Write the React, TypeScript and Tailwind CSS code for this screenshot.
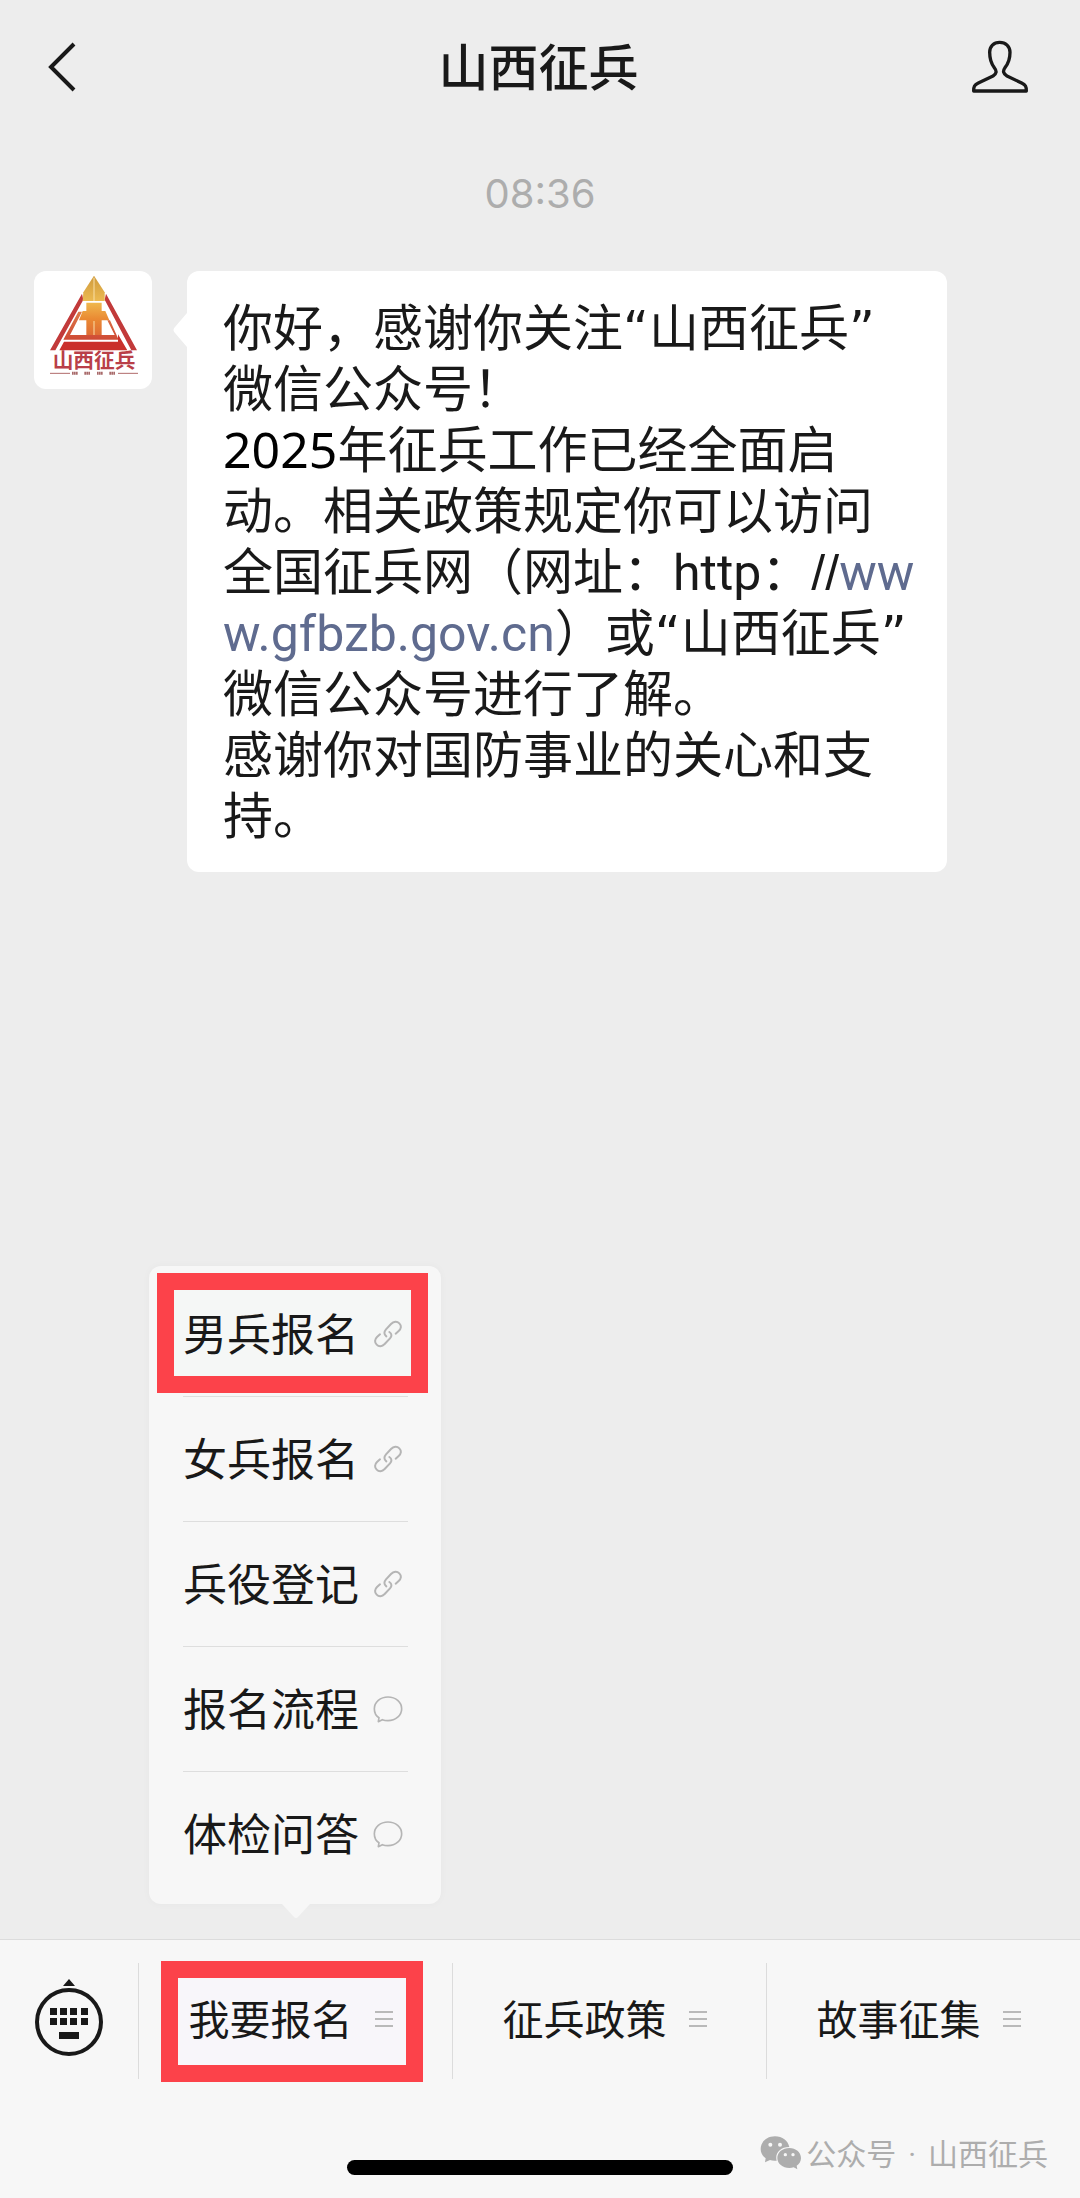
import React from "react";

type MenuEntry = { label: string; kind: "link" | "chat"; marked?: boolean };

const entries: MenuEntry[] = [
  { label: "男兵报名", kind: "link", marked: true },
  { label: "女兵报名", kind: "link" },
  { label: "兵役登记", kind: "link" },
  { label: "报名流程", kind: "chat" },
  { label: "体检问答", kind: "chat" },
];

function BackIcon() {
  return (
    <svg width="30" height="52" viewBox="0 0 30 52" fill="none" stroke="#191919" strokeWidth="4" aria-hidden="true">
      <path d="M27 3 L4 26 L27 49" />
    </svg>
  );
}

function PersonIcon() {
  return (
    <svg width="60" height="58" viewBox="89 53 180 174" fill="none" stroke="#191919" strokeWidth="10" strokeLinejoin="round" aria-hidden="true">
      <path d="M178 66 C160 66 148 78 148 96 C148 118 154 132 162 142 C170 152 169 160 158 167 L114 188 C102 194 100 198 100 212 L258 212 C258 198 256 194 244 188 L200 167 C188 160 187 152 194 142 C204 130 209 116 209 96 C209 78 196 66 178 66 Z" />
    </svg>
  );
}

function Logo() {
  return (
    <svg className="block size-full" viewBox="-36 0 354 354" role="img" aria-label="山西征兵">
      <defs>
        <linearGradient id="tip" x1="0" y1="0" x2="0" y2="1">
          <stop offset="0" stopColor="#cf9a3c" />
          <stop offset="1" stopColor="#ecba52" />
        </linearGradient>
        <linearGradient id="body" x1="0" y1="0" x2="0" y2="1">
          <stop offset="0" stopColor="#efb84e" />
          <stop offset="0.5" stopColor="#ea8a33" />
          <stop offset="1" stopColor="#df6d35" />
        </linearGradient>
        <linearGradient id="frame" x1="0" y1="0" x2="0" y2="1">
          <stop offset="0" stopColor="#dd7a48" />
          <stop offset="1" stopColor="#cf4a35" />
        </linearGradient>
      </defs>
      <path d="M108 68 L112 86 L28 238 L12 238 Z M180 68 L176 86 L256 238 L273 238 Z" fill="#c23a3a" />
      <path d="M97 122 L108 122 L72 192 L206 192 L184 148 L192 148 L218 206 L52 206 Z" fill="url(#frame)" />
      <path d="M54 212 H216 V190 L244 238 H40 Z" fill="#ca302b" />
      <path d="M144 14 L112 64 L110 90 L176 90 L176 64 Z" fill="url(#tip)" />
      <path d="M121 95 H167 V120 H178 L190 148 H167 V192 H121 V148 H99 L110 120 H121 Z" fill="url(#body)" />
      <path d="M144 20 V90 M144 150 V192" stroke="#f9dfa8" strokeWidth="3" />
      <text x="144" y="291" textAnchor="middle" fontSize="62" fontWeight="700" fill="#b93f48" fontFamily="'Noto Sans CJK SC', sans-serif">
        山西征兵
      </text>
      <path d="M12 307 H72 M216 307 H276" stroke="#b06a6a" strokeWidth="3" />
      <path d="M78 307 H96 M115 307 H133 M153 307 H171 M190 307 H208" stroke="#a86a6a" strokeWidth="9" strokeDasharray="5 1" />
    </svg>
  );
}

function LinkIcon() {
  return (
    <svg width="30" height="30" viewBox="0 0 90 90" fill="none" stroke="#b5b5b5" strokeWidth="6" strokeLinecap="round" aria-hidden="true">
      <path d="M40 52 C32 46 33 38 39 31 L54 15 C62 7 72 6 79 13 C86 20 85 29 77 36 L68 44" />
      <path d="M49 39 C57 44 57 52 51 58 L35 75 C27 83 18 84 11 77 C4 70 5 61 12 54 L21 46" />
    </svg>
  );
}

function ChatIcon() {
  return (
    <svg width="30" height="30" viewBox="0 0 90 90" fill="none" stroke="#b5b5b5" strokeWidth="5" strokeLinejoin="round" aria-hidden="true">
      <path d="M45 9 C68 9 86 24 86 44 C86 64 68 80 45 80 C38 80 33 79 28 77 L16 83 L18 71 C8 65 4 55 4 44 C4 24 22 9 45 9 Z" />
    </svg>
  );
}

function BarsIcon() {
  return (
    <svg width="18" height="18" viewBox="0 0 18 18" stroke="#b9b9b9" strokeWidth="2" aria-hidden="true">
      <path d="M0 2 H18 M0 9 H18 M0 16 H18" />
    </svg>
  );
}

function KeyboardIcon() {
  return (
    <svg width="68" height="78" viewBox="0 0 68 78" fill="#191919" aria-hidden="true">
      <path d="M34 0 L40 7 H28 Z" />
      <circle cx="34" cy="43" r="32" fill="none" stroke="#191919" strokeWidth="4" />
      <path d="M15 29h7v7h-7z M25 29h7v7h-7z M35 29h7v7h-7z M46 29h7v7h-7z M15 39h7v7h-7z M25 39h7v7h-7z M35 39h7v7h-7z M46 39h7v7h-7z M24 53h20v7h-20z" />
    </svg>
  );
}

function WeChatIcon() {
  return (
    <svg width="42" height="36" viewBox="48 52 126 108" fill="#adadad" aria-hidden="true">
      <path d="M93 56 C69 56 50 72 50 94 C50 106 56 115 65 122 L63 134 L78 127 C83 129 90 130 98 129 C92 108 108 88 136 88 C132 69 115 56 93 56 Z" />
      <path d="M136 91 C116 91 100 104 100 121 C100 138 116 151 136 151 C141 151 145 150 149 149 L160 155 L158 144 C166 139 171 131 171 121 C171 104 155 91 136 91 Z" />
      <g fill="#f7f7f7">
        <circle cx="79" cy="81" r="6" />
        <circle cx="108" cy="81" r="6" />
        <circle cx="124" cy="111" r="5" />
        <circle cx="147" cy="111" r="5" />
      </g>
    </svg>
  );
}

function PopupMenu() {
  return (
    <div className="absolute bottom-full left-2.5 mb-[59px] w-[292px] rounded-xl bg-[#f7f7f7] pt-1.5 pb-[7px] shadow-[0_0_8px_rgba(0,0,0,0.03)]">
      <ul className="pr-[33px] pl-[34px]">
        {entries.map((e) => (
          <li key={e.label} className="relative h-[125px] border-b border-[#dedede] last:border-transparent">
            {e.marked && (
              <span className="pointer-events-none absolute -left-[26px] top-px h-[120px] w-[271px] border-[17px] border-[#fc424a] bg-[#f5f7f6]" />
            )}
            <a href="#" className="relative flex h-full items-center text-[44px] leading-none whitespace-nowrap">
              <span className="flex-1 pt-1">{e.label}</span>
              <span className="flex w-10 justify-center">{e.kind === "link" ? <LinkIcon /> : <ChatIcon />}</span>
            </a>
          </li>
        ))}
      </ul>
      <svg className="absolute top-full left-[133px]" width="28" height="14" viewBox="0 0 28 14" fill="#f7f7f7" aria-hidden="true">
        <path d="M0 0 H28 L16 13 Q14 15 12 13 Z" />
      </svg>
    </div>
  );
}

function Tab({ label, marked, children }: { label: string; marked?: boolean; children?: React.ReactNode }) {
  return (
    <div className="relative flex-1 border-l border-[#dcdcdc]">
      {marked && (
        <span className="pointer-events-none absolute top-[-2px] left-[22px] h-[121px] w-[262px] border-[17px] border-[#fc424a] bg-[#f8f6fa]" />
      )}
      <button type="button" className="relative flex size-full items-center justify-center gap-[22px] pr-2.5 pb-1 text-[41px] leading-none whitespace-nowrap">
        <span className="pt-1">{label}</span>
        <BarsIcon />
      </button>
      {children}
    </div>
  );
}

const curly = "font-['DejaVu_Sans'] leading-none";

function Quoted({ children }: { children: React.ReactNode }) {
  return (
    <>
      <span className={curly}>“</span>
      {children}
      <span className={curly}>”</span>
    </>
  );
}

export default function App() {
  return (
    <div className="flex min-h-screen flex-col bg-[#ededed] font-['Roboto','Noto_Sans_CJK_SC',sans-serif] text-[#191919]" lang="zh-CN">
      <header className="flex h-[134px] items-center justify-between pr-[50px] pl-[47px]">
        <button type="button" aria-label="返回" className="w-[60px]">
          <BackIcon />
        </button>
        <h1 className="pt-1 text-[50px] leading-none font-medium">山西征兵</h1>
        <button type="button" aria-label="个人资料" className="w-[60px]">
          <PersonIcon />
        </button>
      </header>

      <main className="flex-1">
        <p className="pt-9 text-center font-['Inter'] text-[40px] leading-[48px] text-[#adadad]">08:36</p>
        <div className="mt-[53px] flex items-start gap-[35px] pr-[133px] pl-[34px]">
          <div className="size-[118px] shrink-0 overflow-hidden rounded-xl bg-white">
            <Logo />
          </div>
          <div className="relative flex-1 rounded-xl bg-white pt-7 pr-7 pb-6 pl-9 text-[50px] leading-[61px] break-all">
            <svg className="absolute top-[42px] right-full" width="14" height="34" viewBox="0 0 14 34" fill="#fff" aria-hidden="true">
              <path d="M14 0 L2 14 Q-1 17 2 20 L14 34 Z" />
            </svg>
            <p>
              你好，感谢你关注<Quoted>山西征兵</Quoted>
              <br />
              微信公众号！
            </p>
            <p>
              <span className="font-['Noto_Sans'] leading-none text-black">2025</span>年征兵工作已经全面启动。相关政策规定你可以访问全国征兵网（网址：http：
              <span className="font-['Liberation_Sans'] leading-none">//</span>
              <a href="#" className="text-[#5f6b8f]">www.gfbzb.gov.cn</a>）或<Quoted>山西征兵</Quoted>
              <br />
              微信公众号进行了解。
            </p>
            <p>感谢你对国防事业的关心和支持。</p>
          </div>
        </div>
      </main>

      <footer className="border-t border-[#dcdcdc] bg-[#f7f7f7] pt-[23px] pb-[23px]">
        <nav className="flex h-[116px]">
          <button type="button" aria-label="键盘" className="flex w-[138px] items-center justify-center pb-1.5">
            <KeyboardIcon />
          </button>
          <Tab label="我要报名" marked>
            <PopupMenu />
          </Tab>
          <Tab label="征兵政策" />
          <Tab label="故事征集" />
        </nav>
        <div className="mt-14 grid grid-cols-[1fr_386px_1fr] items-end">
          <span />
          <div className="h-[15px] rounded-full bg-black" />
          <div className="flex h-10 items-start justify-end gap-1 pr-8 text-[30px] leading-10 whitespace-nowrap text-[#adadad]">
            <WeChatIcon />
            <span>公众号</span>
            <span className="px-2">·</span>
            <span>山西征兵</span>
          </div>
        </div>
      </footer>
    </div>
  );
}
